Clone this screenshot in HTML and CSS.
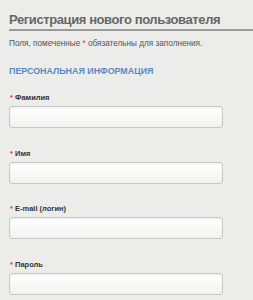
FILE: index.html
```html
<!DOCTYPE html>
<html lang="ru">
<head>
    <meta charset="UTF-8">
    <meta name="viewport" content="width=device-width, initial-scale=1.0">
    <title>Регистрация нового пользователя</title>
    <link rel="stylesheet" href="styles.css">
</head>
<body>
    <div class="page">
        <h1 class="page-title">Регистрация нового пользователя</h1>
        <p class="note">Поля, помеченные <span class="req">*</span> обязательны для заполнения.</p>

        <h2 class="section-title">Персональная информация</h2>

        <div class="field">
            <label for="lastName"><span class="req">*</span> Фамилия</label>
            <input type="text" id="lastName">
        </div>
        <div class="field">
            <label for="firstName"><span class="req">*</span> Имя</label>
            <input type="text" id="firstName">
        </div>
        <div class="field">
            <label for="email"><span class="req">*</span> E-mail (логин)</label>
            <input type="text" id="email">
        </div>
        <div class="field">
            <label for="password"><span class="req">*</span> Пароль</label>
            <input type="password" id="password">
        </div>
    </div>
</body>
</html>
```

FILE: styles.css
```css
body {
    margin: 0;
    background-color: #ecedea;
    font-family: "Liberation Sans", Arial, sans-serif;
    color: #444;
}
.page {
    padding: 12px 0 0 9px;
}
.page-title {
    margin: 0;
    padding-bottom: 1px;
    border-bottom: 2px solid #9a9a9a;
    font-size: 13px;
    line-height: 16px;
    letter-spacing: -0.4px;
    color: #666;
}
.note {
    margin: 7px 0 0;
    font-size: 8.2px;
    line-height: 12px;
    color: #555;
}
.req {
    color: #e0304a;
}
.section-title {
    margin: 15px 0 0;
    font-size: 8.9px;
    line-height: 13px;
    text-transform: uppercase;
    color: #5b88c4;
}
.field {
    display: flex;
    flex-direction: column;
    gap: 3px;
    margin-top: 15px;
}
.field + .field {
    margin-top: 20.5px;
}
.field label {
    font-size: 7.5px;
    line-height: 10px;
    font-weight: bold;
    color: #333;
    padding-left: 1px;
}
.field input {
    box-sizing: border-box;
    width: 214px;
    height: 22px;
    margin: 0;
    border: 1px solid #c8c8c6;
    border-radius: 3px;
    background: linear-gradient(#ffffff, #f3f3f2);
    box-shadow: inset 0 1px 2px rgba(0,0,0,0.08);
}
```
